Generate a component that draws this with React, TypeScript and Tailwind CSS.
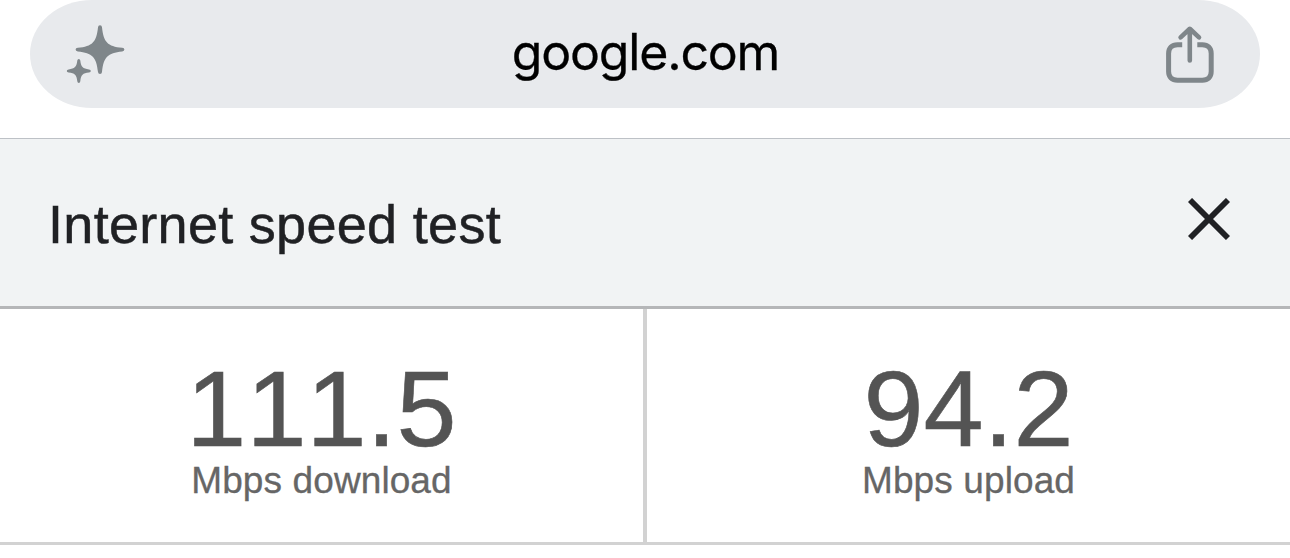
interface IconProps {
  className?: string;
}

const SparkleIcon = ({ className }: IconProps) => (
  <svg viewBox="0 0 60 60" fill="currentColor" className={className}>
    <path d="M34 1.2Q35.8 1.2 36 3.2C37.5 18 41.5 22.3 56.2 23.8Q58.4 24 58.4 25.6Q58.4 27.2 56.2 27.4C41.5 28.9 37.5 33.2 36 48Q35.8 50 34 50Q32.2 50 32 48C30.5 33.2 26.5 28.9 11.8 27.4Q9.6 27.2 9.6 25.6Q9.6 24 11.8 23.8C26.5 22.3 30.5 18 32 3.2Q32.2 1.2 34 1.2Z" />
    <path d="M12.8 35Q14.1 35 14.3 36.6C15 43 16.8 44.8 23 45.4Q24.8 45.6 24.8 46.9Q24.8 48.2 23 48.4C16.8 49 15 50.8 14.3 57.2Q14.1 59 12.8 59Q11.5 59 11.3 57.2C10.6 50.8 8.8 49 2.6 48.4Q0.8 48.2 0.8 46.9Q0.8 45.6 2.6 45.4C8.8 44.8 10.6 43 11.3 36.6Q11.5 35 12.8 35Z" />
  </svg>
);

const ShareIcon = ({ className }: IconProps) => (
  <svg
    viewBox="0 0 50 58"
    fill="none"
    stroke="currentColor"
    className={className}
  >
    <path
      d="M17.2 19.8H12.5C6.8 19.8 3.6 23 3.6 28.5V46.5C3.6 52 6.8 55.2 12.5 55.2H37.3C43 55.2 46.2 52 46.2 46.5V28.5C46.2 23 43 19.8 37.3 19.8H32.3"
      strokeWidth="5"
    />
    <path
      d="M24.8 35.5V4.5M15.6 12.4L24.8 3.8L34 12.4"
      strokeWidth="4.6"
      strokeLinecap="round"
      strokeLinejoin="round"
    />
  </svg>
);

const CloseIcon = ({ className }: IconProps) => (
  <svg
    viewBox="0 0 42 42"
    fill="none"
    stroke="currentColor"
    strokeWidth="5.8"
    className={className}
  >
    <path d="M2 2L40 40M40 2L2 40" />
  </svg>
);

const results = [
  { value: "111.5", label: "Mbps download" },
  { value: "94.2", label: "Mbps upload" },
];

export default function App() {
  return (
    <div className="h-[558px] w-[1290px] overflow-hidden bg-white font-['Liberation_Sans',Arial,sans-serif]">
      {/* Address bar */}
      <div className="h-[138px] px-[30px]">
        <div className="flex h-[108px] items-center justify-between rounded-[62px/54px] bg-[#e8eaed] pr-[45px] pl-9">
          <SparkleIcon className="size-[60px] text-[#7f868a]" />
          <span className="pb-[5px] font-[Inter,sans-serif] text-[50px] leading-[60px] tracking-[-1.2px] text-black [-webkit-text-stroke:0.3px_currentColor]">
            google.com
          </span>
          <ShareIcon className="h-[58px] w-[50px] text-[#7f868a]" />
        </div>
      </div>

      <header className="flex h-[171px] items-start justify-between border-t border-b-[3px] border-t-[#bdc1c6] border-b-[#b5b6b8] bg-[#f1f3f4] pr-[60px] pl-12">
        <h1 className="pt-[54px] text-[54px] leading-[62px] tracking-[0.3px] text-[#202124] [-webkit-text-stroke:0.5px_currentColor]">
          Internet speed test
        </h1>
        <button className="pt-[59px] text-[#202124]">
          <CloseIcon className="size-[42px]" />
        </button>
      </header>

      <div className="flex h-[236px] divide-x-4 divide-[#d2d2d2] border-b-[3px] border-[#d2d2d2]">
        {results.map((item) => (
          <div key={item.label} className="flex-1 pt-[50px] text-center">
            <div className="text-[108px] leading-[100px] text-[#545454] [-webkit-text-stroke:0.6px_currentColor] [font-kerning:none]">
              {item.value}
            </div>
            <div className="text-[37px] leading-[43px] tracking-[0.1px] text-[#666] [-webkit-text-stroke:0.3px_currentColor]">
              {item.label}
            </div>
          </div>
        ))}
      </div>
    </div>
  );
}
